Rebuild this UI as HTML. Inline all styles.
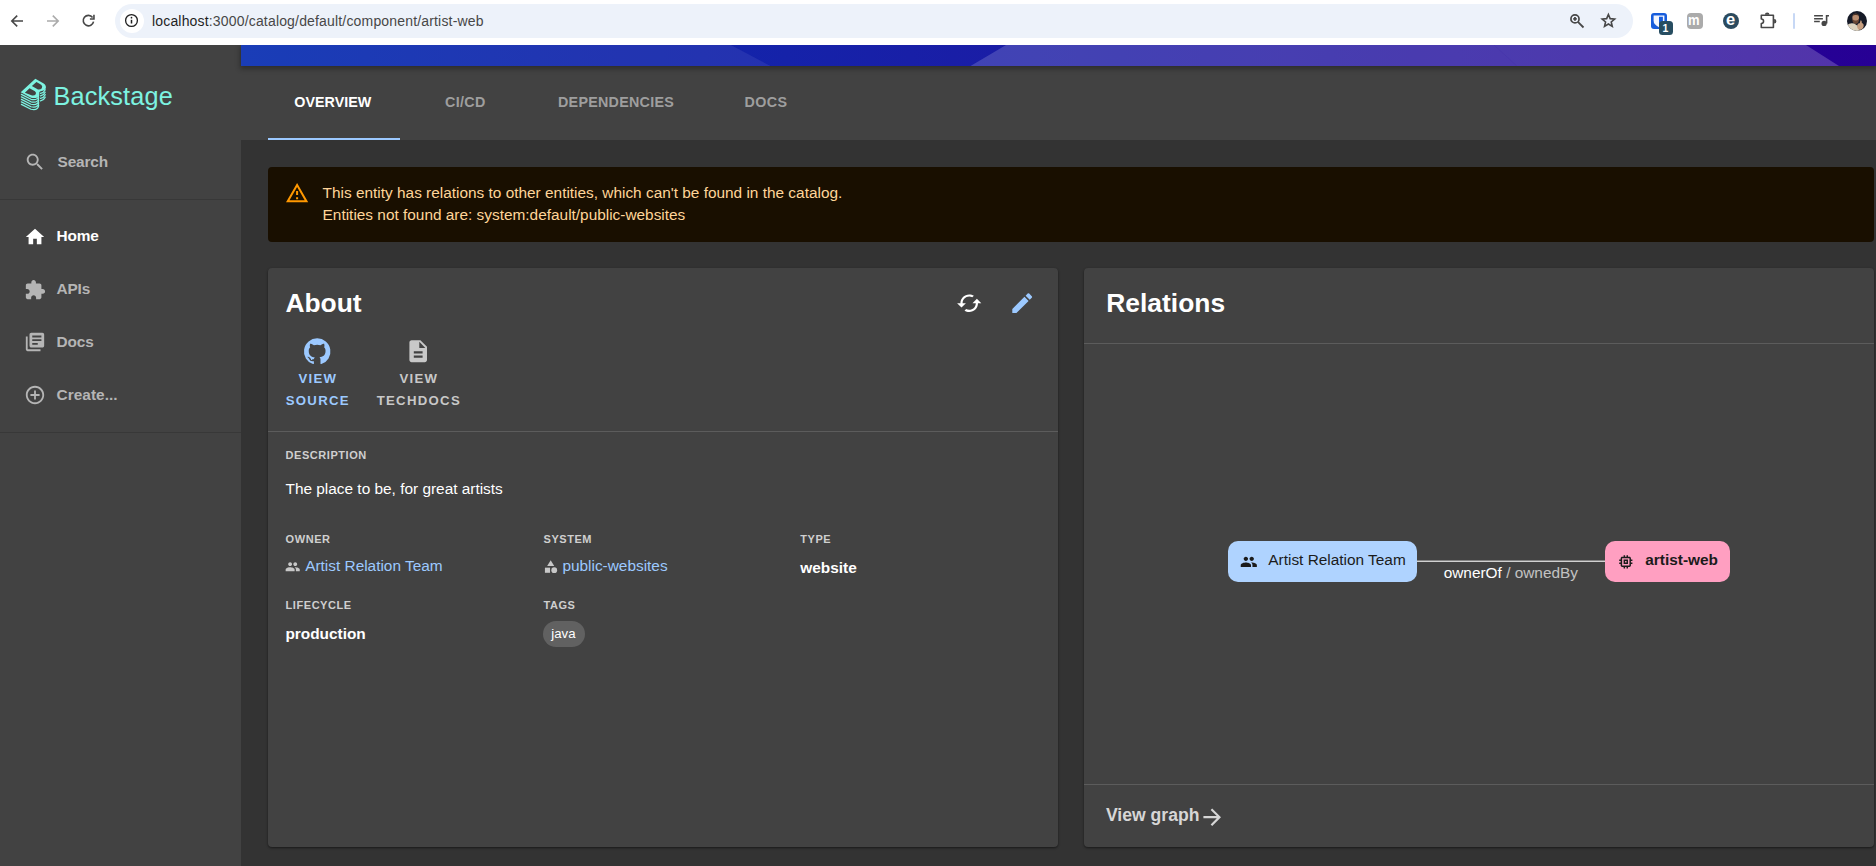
<!DOCTYPE html>
<html lang="en">
<head>
<meta charset="utf-8">
<title>artist-web | Overview | Backstage</title>
<style>
*{box-sizing:border-box;margin:0;padding:0}
html,body{width:1876px;height:866px;overflow:hidden;background:#333333}
body{font-family:"Liberation Sans",Arial,sans-serif;color:#fff;position:relative;-webkit-font-smoothing:antialiased}
.abs{position:absolute}
svg{display:block;position:absolute;overflow:visible}
.t{position:absolute;white-space:nowrap;line-height:1}

/* ---------- browser chrome ---------- */
#chrome{left:0;top:0;width:1876px;height:45px;background:#ffffff}
#pill{left:115.2px;top:4px;width:1518.1px;height:34px;border-radius:17px;background:#edf2fa}
#infoc{left:119.8px;top:9px;width:24px;height:24px;border-radius:12px;background:#ffffff}
#url{left:152px;top:14.3px;font-size:14px;color:#474747;letter-spacing:0.17px}

/* ---------- sidebar ---------- */
#side{left:0;top:45px;width:241px;height:821px;background:#424242}
.sdiv{left:0;width:241px;height:1px;background:#383838}
.nav{font-size:15.4px;font-weight:bold;color:#b5b5b5;left:56.5px;letter-spacing:-0.15px}
.nav.sel{color:#ffffff}

/* ---------- header band + tabs ---------- */
#band{left:241px;top:45px;width:1635px;height:21px;background:linear-gradient(90deg,#0027af 0%,#270094 100%);overflow:hidden}
#tabs{left:241px;top:66px;width:1635px;height:74px;background:#424242}
#bandshadow{left:241px;top:45px;width:1635px;height:21px;box-shadow:0 2px 5px 1px rgba(0,0,0,.32);clip-path:inset(0 -20px -20px -20px)}
.tab{font-size:14.3px;font-weight:bold;color:#9e9e9e;top:94.6px;letter-spacing:0.75px}
.tab.sel{color:#ffffff}
#ind{left:268px;top:138px;width:132px;height:2px;background:#9cc9ff}

/* ---------- warning ---------- */
#warn{left:268px;top:167px;width:1606px;height:75px;border-radius:4px;background:#190f00}
.wt{font-size:15.4px;color:#ffd599;left:322.6px}

/* ---------- cards ---------- */
.card{background:#424242;border-radius:4px;box-shadow:0 1px 2px 0 rgba(0,0,0,.35),0 1px 3px 0 rgba(0,0,0,.2)}
#about{left:268px;top:268px;width:790px;height:579px}
#rel{left:1084px;top:268px;width:790px;height:579px}
.hline{height:1px;background:#5c5c5c}
.h5{font-size:26.4px;font-weight:bold;color:#fff}
.lbl{font-size:11px;font-weight:bold;color:#cfcfcf;letter-spacing:0.55px;text-transform:uppercase}
.val{font-size:15.4px;color:#fff}
.link{color:#9cc9ff}
.b{font-weight:bold}
.icl{font-size:13.2px;font-weight:bold;letter-spacing:1.3px;text-align:center;line-height:22px;white-space:nowrap}
</style>
</head>
<body>

<!-- ===== Browser chrome ===== -->
<div id="chrome" class="abs"></div>
<div id="pill" class="abs"></div>
<div id="infoc" class="abs"></div>
<div id="url" class="t"><span style="color:#1f1f1f">localhost</span>:3000/catalog/default/component/artist-web</div>


<!-- back / forward / reload -->
<svg style="left:9px;top:12.7px" width="16" height="16" viewBox="0 0 16 16" fill="none" stroke="#474747" stroke-width="1.6" stroke-linecap="butt" stroke-linejoin="miter"><path d="M14 8H3.2M8.2 2.6 2.8 8l5.400 5.400"/></svg>
<svg style="left:44.600px;top:12.7px" width="16" height="16" viewBox="0 0 16 16" fill="none" stroke="#ababab" stroke-width="1.6"><path d="M2 8h10.800M7.800 2.600 13.200 8l-5.400 5.400"/></svg>
<svg style="left:80px;top:12.300px" width="17" height="17" viewBox="0 0 17 17" fill="none" stroke="#474747" stroke-width="1.600"><path d="M12.600 5.500A5.200 5.200 0 1 0 13.550 9.600"/><path d="M13.950 2.700V7H9.900" stroke-linejoin="miter"/></svg>
<!-- info icon -->
<svg style="left:124.200px;top:13.400px" width="15" height="15" viewBox="0 0 15 15" fill="none" stroke="#1f1f1f" stroke-width="1.300"><circle cx="7.500" cy="7.500" r="5.900"/><path d="M7.500 6.800v3.700" stroke-width="1.500"/><circle cx="7.500" cy="4.700" r=".85" fill="#1f1f1f" stroke="none"/></svg>
<!-- zoom icon -->
<svg style="left:1568px;top:12px" width="18" height="18" viewBox="0 0 18 18" fill="none" stroke="#474747" stroke-width="1.700"><circle cx="6.980" cy="6.900" r="4.050"/><path d="M9.900 9.900 15.500 15.500" stroke-width="1.800"/><path d="M5.200 6.900h3.560M6.980 5.120v3.560" stroke-width="1.800"/></svg>
<!-- star -->
<svg style="left:1600.300px;top:12.100px" width="16.800" height="16.800" viewBox="0 0 24 24" fill="none" stroke="#474747" stroke-width="2.300" stroke-linejoin="miter"><path d="M12 3.600l2.500 5.900 6.400.55-4.850 4.200 1.450 6.250L12 17.200l-5.500 3.300 1.450-6.250L3.100 10.050l6.400-.55z"/></svg>
<!-- ext 1 : blue square with badge -->
<svg style="left:1651px;top:13px" width="16" height="16" viewBox="0 0 16 16"><rect width="16" height="16" rx="3" fill="#175ddc"/><path d="M2.600 2.400H13.400V7.600Q13.400 12 8 14.200Q2.600 12 2.600 7.600Z" fill="#f3f6fe"/><path d="M8 3.800H11.900V7.600Q11.900 10.800 8 12.600Z" fill="#175ddc"/><path d="M8 3.800H9.700V6.200H8Z" fill="#f3f6fe" opacity=".0"/></svg>
<div class="abs" style="left:1659px;top:21px;width:14px;height:14px;border-radius:3.500px;background:#274d61"></div>
<div class="t" style="left:1662.400px;top:23.300px;font-size:10.500px;font-weight:bold;color:#fff">1</div>
<!-- ext 2 : gray m -->
<div class="abs" style="left:1687px;top:13px;width:16px;height:16px;border-radius:4px;background:#ababab"></div>
<div class="t" style="left:1688.100px;top:12.600px;font-size:14.800px;font-weight:bold;color:#fff;transform:scaleX(.88);transform-origin:0 0">m</div>
<!-- ext 3 : navy e -->
<div class="abs" style="left:1723.200px;top:13px;width:16px;height:16px;border-radius:8px;background:#2b4a5e"></div>
<div class="t" style="left:1726.100px;top:11.100px;font-size:16.500px;font-weight:bold;color:#fff">e</div>
<!-- extensions puzzle -->
<svg style="left:1758.600px;top:11.600px" width="18" height="18" viewBox="0 0 18 18"><path d="M2.300 3.300H14.400V15.500H2.300V11.500A2.250 2.250 0 0 0 2.300 7Z" fill="none" stroke="#474747" stroke-width="1.600" stroke-linejoin="round"/><path d="M5.900 2.700A2.300 2.300 0 0 1 10.500 2.700ZM15.100 6.900A2.300 2.300 0 0 1 15.100 11.500Z" fill="#474747"/></svg>
<!-- separator -->
<div class="abs" style="left:1793px;top:13px;width:1.500px;height:16px;border-radius:1px;background:#c7d8f5"></div>
<!-- media -->
<svg style="left:1812px;top:12px" width="20" height="16" viewBox="1812 12 20 16"><path d="M1814.100 15.800H1822.900M1814.100 18.700H1822.900M1814.100 21.600H1819.800" stroke="#474747" stroke-width="1.500" fill="none"/><path d="M1826.600 15H1829V16.600H1827.400V23.500H1825.800V15Z" fill="#474747"/><circle cx="1824.100" cy="23.400" r="2.600" fill="#474747"/></svg>
<!-- avatar -->
<svg style="left:1847px;top:10.800px;border-radius:50%;overflow:hidden" width="20.200" height="20.200" viewBox="0 0 20 20"><g><rect width="20" height="20" fill="#161a27"/><ellipse cx="8.600" cy="6.700" rx="3.300" ry="3.900" fill="#b98d70"/><path d="M5.300 7.600Q5.200 12.600 8.600 12.800Q12 12.600 11.900 7.600Q10.600 9.800 8.600 9.300Q6.600 9.800 5.300 7.600Z" fill="#6a4836"/><path d="M5.400 5.200Q6 2.300 8.600 2.400Q11.300 2.300 11.900 5.200Q10.400 3.700 8.600 3.900Q6.800 3.700 5.400 5.200Z" fill="#4a3226"/><path d="M0 14Q3 11.300 7 12.400L10.500 14.500L13 20H0Z" fill="#ddd3bf"/><path d="M10 14.500Q10.500 12 12.600 12.200L13.400 9.300Q14.800 8.800 14.700 11.800Q17 12.300 16.400 15.500Q15.500 18.500 12.500 18.600Q10 18 10 14.500Z" fill="#c79f80"/></g></svg>

<!-- ===== Sidebar ===== -->
<div id="side" class="abs"></div>


<!-- logo -->
<svg style="left:14px;top:72px" width="48" height="44" viewBox="0 0 945 866">
  <path fill="#7df3e1" fill-rule="evenodd" d="M132,400 L420,132 L585,228 Q640,268 626,322 Q606,372 524,380 L500,392 Q508,450 470,490 Q420,528 335,505 Z M352,277 L442,197 L535,252 Q568,280 548,318 Q522,350 472,342 Z M214,406 L306,319 L412,378 Q445,403 428,438 Q402,474 342,460 Z"/>
  <path fill="none" stroke="#7df3e1" stroke-width="25" stroke-linecap="round" stroke-linejoin="round" d="M146,441 L335,537 Q415,561 462,519 Q486,494 486,454 M146,490 L335,586 Q415,610 462,568 Q486,543 486,503 M146,539 L335,635 Q415,659 462,617 Q486,592 486,552 M146,588 L335,684 Q415,708 462,666 Q486,641 486,601 M146,637 L335,733 Q415,757 462,715 Q486,690 486,650 M522,421 Q590,407 614,349 M522,470 Q590,456 614,398 M522,519 Q590,505 614,447 M522,568 Q590,554 614,496 "/>
</svg>
<div class="t" id="logotext" style="left:53.4px;top:83.7px;font-size:25.3px;color:#7df3e1;letter-spacing:0.15px">Backstage</div>

<!-- search -->
<svg style="left:24.4px;top:151.2px" width="22" height="22" viewBox="0 0 24 24" fill="#b5b5b5"><path d="M15.5 14h-.79l-.28-.27C15.41 12.59 16 11.11 16 9.5 16 5.91 13.09 3 9.500 3S3 5.910 3 9.500 5.910 16 9.500 16c1.610 0 3.090-.59 4.230-1.570l.27.28v.79l5 4.990L20.490 19l-4.990-5zm-6 0C7.010 14 5 11.990 5 9.500S7.010 5 9.500 5 14 7.010 14 9.500 11.990 14 9.500 14z"/></svg>
<div class="t nav" style="top:153.6px;left:57.6px">Search</div>
<div class="abs sdiv" style="top:199px"></div>

<!-- home -->
<svg style="left:23.9px;top:225.7px" width="22" height="22" viewBox="0 0 24 24" fill="#ffffff"><path d="M10 20v-6h4v6h5v-8h3L12 3 2 12h3v8z"/></svg>
<div class="t nav sel" style="top:228.3px">Home</div>
<!-- apis -->
<svg style="left:23.9px;top:278.5px" width="22" height="22" viewBox="0 0 24 24" fill="#b5b5b5"><path d="M20.500 11H19V7c0-1.100-.9-2-2-2h-4V3.500C13 2.120 11.880 1 10.500 1S8 2.120 8 3.500V5H4c-1.100 0-1.990.9-1.990 2v3.800H3.500c1.490 0 2.700 1.210 2.700 2.700s-1.210 2.700-2.700 2.700H2V20c0 1.100.9 2 2 2h3.800v-1.500c0-1.490 1.210-2.700 2.700-2.700 1.490 0 2.700 1.210 2.700 2.700V22H17c1.100 0 2-.9 2-2v-4h1.500c1.380 0 2.500-1.120 2.500-2.500S21.880 11 20.500 11z"/></svg>
<div class="t nav" style="top:281.1px">APIs</div>
<!-- docs -->
<svg style="left:23.9px;top:331.3px" width="22" height="22" viewBox="0 0 24 24" fill="#b5b5b5"><path d="M4 6H2v14c0 1.100.9 2 2 2h14v-2H4V6zm16-4H8c-1.100 0-2 .9-2 2v12c0 1.100.9 2 2 2h12c1.100 0 2-.9 2-2V4c0-1.100-.9-2-2-2zm-1 9H9V9h10v2zm-4 4H9v-2h6v2zm4-8H9V5h10v2z"/></svg>
<div class="t nav" style="top:333.9px">Docs</div>
<!-- create -->
<svg style="left:23.9px;top:384.1px" width="22" height="22" viewBox="0 0 24 24" fill="#b5b5b5"><path d="M13 7h-2v4H7v2h4v4h2v-4h4v-2h-4V7zm-1-5C6.480 2 2 6.480 2 12s4.480 10 10 10 10-4.480 10-10S17.520 2 12 2zm0 18c-4.410 0-8-3.590-8-8s3.590-8 8-8 8 3.590 8 8-3.590 8-8 8z"/></svg>
<div class="t nav" style="top:386.7px;letter-spacing:0.05px">Create...</div>
<div class="abs sdiv" style="top:432px"></div>

<!-- ===== Header band ===== -->
<div id="tabs" class="abs"></div>
<div id="bandshadow" class="abs"></div>
<div id="band" class="abs">
<svg style="left:0;top:0" width="1635" height="21" viewBox="241 45 1635 21" preserveAspectRatio="none">
  <polygon points="241,45 731,45 770.5,66 241,66" fill="#fff" fill-opacity=".10"/>
  <polygon points="731,45 1006,45 970.5,66 770.5,66" fill="#fff" fill-opacity=".035"/>
  <polygon points="1006,45 1494,45 1517,66 970.5,66" fill="#fff" fill-opacity=".20"/>
  <polygon points="1494,45 1806,45 1839,66 1517,66" fill="#fff" fill-opacity=".205"/>
</svg>
</div>

<!-- ===== Tabs ===== -->
<div class="t tab sel" style="left:294.3px;letter-spacing:0.02px">OVERVIEW</div>
<div class="t tab" style="left:445px;letter-spacing:0.35px">CI/CD</div>
<div class="t tab" style="left:558px;letter-spacing:0.27px">DEPENDENCIES</div>
<div class="t tab" style="left:744.5px;letter-spacing:0.4px">DOCS</div>
<div id="ind" class="abs"></div>

<!-- ===== Warning ===== -->
<div id="warn" class="abs"></div>
<div class="t wt" style="top:184.5px">This entity has relations to other entities, which can't be found in the catalog.</div>
<div class="t wt" style="top:206.5px">Entities not found are: system:default/public-websites</div>


<svg style="left:285px;top:180.900px" width="24.200" height="24.200" viewBox="0 0 24 24" fill="#ff9800"><path d="M12 5.990L19.530 19H4.470L12 5.990M12 2L1 21h22L12 2zm1 14h-2v2h2v-2zm0-6h-2v4h2v-4z"/></svg>

<!-- ===== About card ===== -->
<div id="about" class="abs card"></div>
<div class="t h5" style="left:285.4px;top:289.7px">About</div>
<div class="abs hline" style="left:268px;top:431px;width:790px"></div>


<!-- header action icons -->
<svg style="left:956px;top:289.800px" width="26.400" height="26.400" viewBox="0 0 24 24" fill="#ffffff"><path d="M19 8l-4 4h3c0 3.310-2.690 6-6 6-1.010 0-1.970-.25-2.800-.7l-1.460 1.460C8.970 19.540 10.430 20 12 20c4.420 0 8-3.580 8-8h3l-4-4zM6 12c0-3.310 2.690-6 6-6 1.010 0 1.970.25 2.800.7l1.460-1.460C15.030 4.460 13.570 4 12 4c-4.420 0-8 3.580-8 8H1l4 4 4-4H6z"/></svg>
<svg style="left:1008.700px;top:289.800px" width="26.400" height="26.400" viewBox="0 0 24 24" fill="#9cc9ff"><path d="M3 17.250V21h3.750L17.810 9.940l-3.750-3.750L3 17.250zM20.710 7.040c.39-.39.39-1.020 0-1.410l-2.340-2.340a.996.996 0 0 0-1.410 0l-1.830 1.830 3.750 3.750 1.830-1.830z"/></svg>

<!-- view source / techdocs -->
<svg style="left:304px;top:337.800px" width="26.400" height="26.400" viewBox="0 0 24 24" fill="#9cc9ff"><path d="M12 .3a12 12 0 0 0-3.800 23.400c.6.100.8-.3.800-.6v-2c-3.300.7-4-1.600-4-1.600-.6-1.400-1.400-1.800-1.400-1.800-1-.7.100-.7.100-.7 1.200 0 1.900 1.200 1.900 1.200 1 1.800 2.800 1.300 3.500 1 0-.8.400-1.300.7-1.600-2.700-.3-5.500-1.300-5.500-6 0-1.200.5-2.300 1.300-3.100-.2-.4-.6-1.600 0-3.200 0 0 1-.3 3.400 1.200a11.500 11.500 0 0 1 6 0c2.300-1.500 3.300-1.200 3.300-1.200.6 1.600.2 2.800 0 3.200.9.800 1.300 1.900 1.300 3.200 0 4.600-2.800 5.600-5.500 5.900.5.400.9 1 .9 2.200v3.300c0 .3.100.7.800.6A12 12 0 0 0 12 .3"/></svg>
<div class="abs icl" style="left:277.200px;top:368.200px;width:80px;color:#9cc9ff;padding-left:1.300px">VIEW<br>SOURCE</div>
<svg style="left:405px;top:337.800px" width="26.400" height="26.400" viewBox="0 0 24 24" fill="#c8c8c8"><path d="M14 2H6c-1.100 0-1.990.9-1.990 2L4 20c0 1.100.89 2 1.990 2H18c1.100 0 2-.9 2-2V8l-6-6zm2 16H8v-2h8v2zm0-4H8v-2h8v2zm-3-5V3.500L18.500 9H13z"/></svg>
<div class="abs icl" style="left:368.200px;top:368.200px;width:100px;color:#c8c8c8;padding-left:1.300px">VIEW<br>TECHDOCS</div>

<!-- fields -->
<div class="t lbl" style="left:285.600px;top:449.600px">Description</div>
<div class="t val" style="left:285.500px;top:481.100px">The place to be, for great artists</div>

<div class="t lbl" style="left:285.600px;top:533.700px">Owner</div>
<svg style="left:285.200px;top:559.100px" width="15.400" height="15.400" viewBox="0 0 24 24" fill="#c8c8c8"><path d="M16 11c1.660 0 2.990-1.340 2.990-3S17.660 5 16 5c-1.660 0-3 1.340-3 3s1.340 3 3 3zm-8 0c1.660 0 2.990-1.340 2.990-3S9.660 5 8 5C6.340 5 5 6.340 5 8s1.340 3 3 3zm0 2c-2.330 0-7 1.170-7 3.500V19h14v-2.500c0-2.330-4.670-3.500-7-3.500zm8 0c-.29 0-.62.020-.97.050 1.160.84 1.970 1.970 1.970 3.450V19h6v-2.500c0-2.330-4.670-3.500-7-3.500z"/></svg>
<div class="t val link" style="left:305.200px;top:557.600px">Artist Relation Team</div>

<div class="t lbl" style="left:543.500px;top:533.700px">System</div>
<svg style="left:543.100px;top:559.400px" width="15.400" height="15.400" viewBox="0 0 24 24" fill="#c8c8c8"><path d="M12 2l-5.500 9h11z"/><circle cx="17.500" cy="17.500" r="4.500"/><path d="M3 13.500h8v8H3z"/></svg>
<div class="t val link" style="left:562.400px;top:557.600px">public-websites</div>

<div class="t lbl" style="left:800.300px;top:533.700px">Type</div>
<div class="t val b" style="left:800.300px;top:559.600px">website</div>

<div class="t lbl" style="left:285.600px;top:599.700px">Lifecycle</div>
<div class="t val b" style="left:285.400px;top:625.600px">production</div>

<div class="t lbl" style="left:543.500px;top:599.700px">Tags</div>
<div class="abs" style="left:543px;top:621px;width:42px;height:26px;border-radius:13px;background:#616161"></div>
<div class="t" style="left:551.300px;top:627px;font-size:13.200px;color:#fff">java</div>

<!-- ===== Relations card ===== -->
<div id="rel" class="abs card"></div>
<div class="t h5" style="left:1106.3px;top:289.7px">Relations</div>
<div class="abs hline" style="left:1084px;top:343px;width:790px"></div>
<div class="abs hline" style="left:1084px;top:784px;width:790px"></div>


<!-- graph -->
<div class="abs" style="left:1417px;top:560px;width:188px;height:1px;background:#848484"></div>
<div class="abs" style="left:1417px;top:561px;width:188px;height:1px;background:#d0d0d0"></div>
<div class="abs" style="left:1228px;top:541px;width:189.300px;height:40.500px;border-radius:10px;background:#afd3ff"></div>
<svg style="left:1239.700px;top:552.500px" width="17.600" height="17.600" viewBox="0 0 24 24" fill="#1b1b1b"><path d="M16 11c1.660 0 2.990-1.340 2.990-3S17.660 5 16 5c-1.660 0-3 1.340-3 3s1.340 3 3 3zm-8 0c1.660 0 2.990-1.340 2.990-3S9.660 5 8 5C6.340 5 5 6.340 5 8s1.340 3 3 3zm0 2c-2.330 0-7 1.170-7 3.500V19h14v-2.500c0-2.330-4.670-3.500-7-3.500zm8 0c-.29 0-.62.020-.97.050 1.160.84 1.970 1.970 1.970 3.450V19h6v-2.500c0-2.330-4.670-3.500-7-3.500z"/></svg>
<div class="t" style="left:1268.300px;top:552.200px;font-size:15.400px;color:#1b1b1b">Artist Relation Team</div>

<div class="abs" style="left:1605px;top:541px;width:125px;height:40.500px;border-radius:10px;background:#ff9fc1"></div>
<svg style="left:1616.600px;top:552.500px" width="17.600" height="17.600" viewBox="0 0 24 24" fill="#1b1b1b"><path d="M15 9H9v6h6V9zm-2 4h-2v-2h2v2zm8-2V9h-2V7c0-1.100-.9-2-2-2h-2V3h-2v2h-2V3H9v2H7c-1.100 0-2 .9-2 2v2H3v2h2v2H3v2h2v2c0 1.100.9 2 2 2h2v2h2v-2h2v2h2v-2h2c1.100 0 2-.9 2-2v-2h2v-2h-2v-2h2zm-4 6H7V7h10v10z"/></svg>
<div class="t b" style="left:1645.300px;top:552.200px;font-size:15.400px;color:#1b1b1b">artist-web</div>

<div class="t" style="left:1443.700px;top:565.100px;font-size:15.400px;color:#fff">ownerOf <span style="color:#c2c2c2">/ ownedBy</span></div>

<!-- footer -->
<div class="t b" style="left:1105.900px;top:807.400px;font-size:17.600px;color:#d6d6d6">View graph</div>
<svg style="left:1199px;top:803.500px" width="26.400" height="26.400" viewBox="0 0 24 24" fill="#d6d6d6"><path d="M12 4l-1.410 1.410L16.170 11H4v2h12.170l-5.580 5.590L12 20l8-8z"/></svg>

</body>
</html>
